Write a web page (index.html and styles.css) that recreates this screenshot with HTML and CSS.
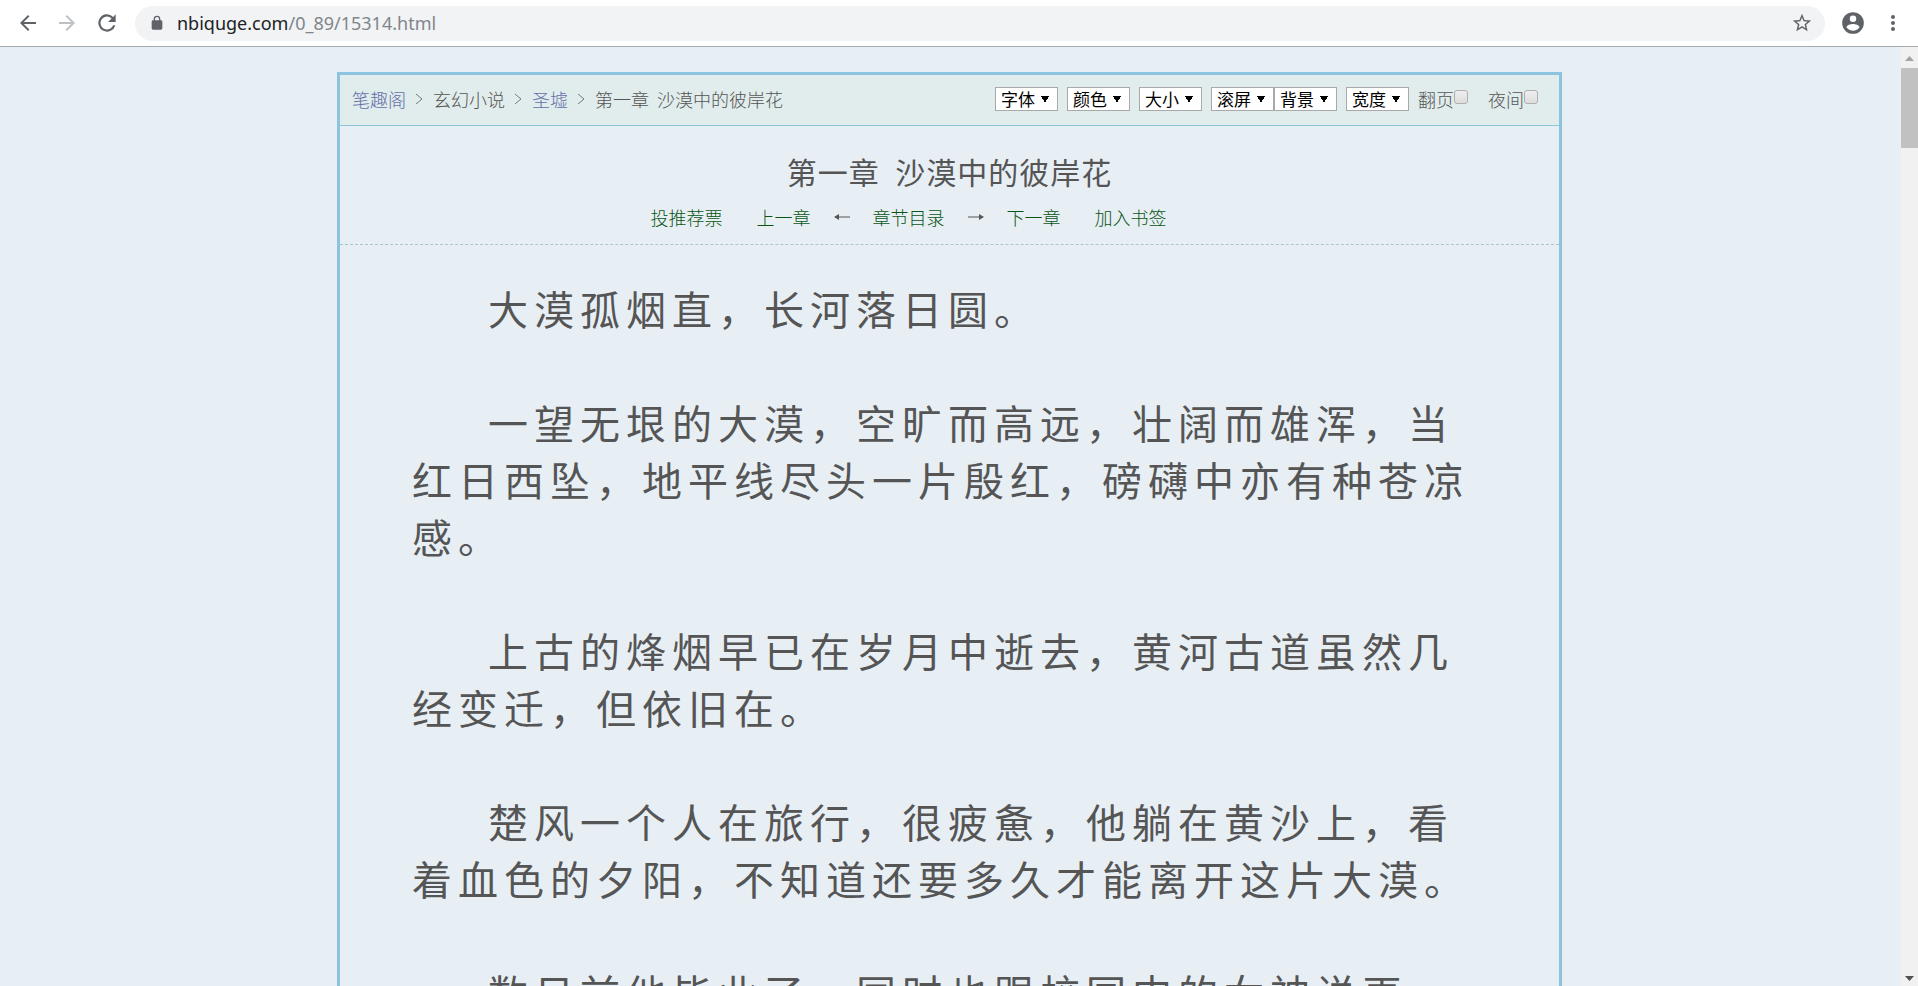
FILE: index.html
```html
<!DOCTYPE html>
<html lang="zh-CN">
<head>
  <meta charset="UTF-8">
  <title>第一章 沙漠中的彼岸花</title>
  <link rel="stylesheet" href="styles.css">
</head>
<body>

  <header class="toolbar">
    <button type="button" class="icon-btn" aria-label="后退">
      <svg width="24" height="24" viewBox="0 0 24 24"><path d="M20 11H7.8l5.6-5.6L12 4l-8 8 8 8 1.4-1.4L7.8 13H20z"/></svg>
    </button>
    <button type="button" class="icon-btn" aria-label="前进" disabled>
      <svg width="24" height="24" viewBox="0 0 24 24"><path d="M4 11h12.2l-5.6-5.6L12 4l8 8-8 8-1.4-1.4 5.6-5.6H4z"/></svg>
    </button>
    <button type="button" class="icon-btn" aria-label="刷新">
      <svg width="26" height="26" viewBox="0 0 24 24"><path d="M17.65 6.35A8 8 0 1 0 19.73 14h-2.08A6 6 0 1 1 12 6c1.66 0 3.14.69 4.22 1.78L13 11h7V4z"/></svg>
    </button>
    <div class="address">
      <svg class="lock" width="16" height="16" viewBox="0 0 24 24"><path d="M18 8h-1V6A5 5 0 0 0 7 6v2H6a2 2 0 0 0-2 2v10c0 1.100.9 2 2 2h12a2 2 0 0 0 2-2V10a2 2 0 0 0-2-2zM9 6a3 3 0 0 1 6 0v2H9z"/></svg>
      <span class="url">nbiquge.com<span class="path">/0_89/15314.html</span></span>
      <button type="button" class="icon-btn star" aria-label="收藏">
        <svg width="22" height="22" viewBox="0 0 24 24"><path d="M22 9.24l-7.19-.62L12 2 9.190 8.630 2 9.240l5.460 4.730L5.820 21 12 17.270 18.180 21l-1.630-7.030L22 9.240zM12 15.400l-3.760 2.270 1-4.280-3.320-2.880 4.380-.38L12 6.100l1.710 4.040 4.380.38-3.320 2.880 1 4.280L12 15.400z"/></svg>
      </button>
    </div>
    <button type="button" class="icon-btn" aria-label="用户">
      <svg width="26" height="26" viewBox="0 0 24 24"><path d="M12 2a10 10 0 1 0 0 20 10 10 0 0 0 0-20zm0 3a3 3 0 1 1 0 6 3 3 0 0 1 0-6zm0 14.200a7.200 7.200 0 0 1-6-3.220c.03-1.990 4-3.080 6-3.080s5.970 1.090 6 3.080a7.200 7.200 0 0 1-6 3.220z"/></svg>
    </button>
    <button type="button" class="icon-btn" aria-label="菜单">
      <svg width="24" height="24" viewBox="0 0 24 24"><path d="M12 8a2 2 0 1 0 0-4 2 2 0 0 0 0 4zm0 2a2 2 0 1 0 0 4 2 2 0 0 0 0-4zm0 6a2 2 0 1 0 0 4 2 2 0 0 0 0-4z"/></svg>
    </button>
  </header>

  <div class="viewport">
    <main class="page">
      <div class="reader">
        <div class="reader-top">
          <nav class="crumbs">
            <a href="#">笔趣阁</a>
            <svg width="7" height="12" viewBox="0 0 7 12"><path d="M0 1l6 5-6 5"/></svg>
            <span>玄幻小说</span>
            <svg width="7" height="12" viewBox="0 0 7 12"><path d="M0 1l6 5-6 5"/></svg>
            <a href="#">圣墟</a>
            <svg width="7" height="12" viewBox="0 0 7 12"><path d="M0 1l6 5-6 5"/></svg>
            <span>第一章&nbsp; 沙漠中的彼岸花</span>
          </nav>
          <form class="settings">
            <select aria-label="字体"><option>字体</option></select>
            <select aria-label="颜色"><option>颜色</option></select>
            <select aria-label="大小"><option>大小</option></select>
            <span class="pair">
              <select aria-label="滚屏"><option>滚屏</option></select>
              <select aria-label="背景"><option>背景</option></select>
            </span>
            <select aria-label="宽度"><option>宽度</option></select>
            <label>翻页<input type="checkbox"></label>
            <label class="night">夜间<input type="checkbox"></label>
          </form>
        </div>

        <div class="chapter-head">
          <h1>第一章&nbsp; 沙漠中的彼岸花</h1>
          <nav class="chapter-nav">
            <a class="vote" href="#">投推荐票</a>
            <a href="#">上一章</a>
            <svg width="16" height="8" viewBox="0 0 16 8"><path d="M0 4l5-3v2.500h11v1H5V7z"/></svg>
            <a href="#">章节目录</a>
            <svg width="16" height="8" viewBox="0 0 16 8"><path d="M16 4l-5-3v2.500H0v1h11V7z"/></svg>
            <a href="#">下一章</a>
            <a class="mark" href="#">加入书签</a>
          </nav>
        </div>

        <article class="content">
          <p>大漠孤烟直，长河落日圆。</p>
          <p>一望无垠的大漠，空旷而高远，壮阔而雄浑，当红日西坠，地平线尽头一片殷红，磅礴中亦有种苍凉感。</p>
          <p>上古的烽烟早已在岁月中逝去，黄河古道虽然几经变迁，但依旧在。</p>
          <p>楚风一个人在旅行，很疲惫，他躺在黄沙上，看着血色的夕阳，不知道还要多久才能离开这片大漠。</p>
          <p>数日前他毕业了，同时也跟校园中的女神说再</p>
        </article>
      </div>
    </main>

    <div class="scrollbar">
      <svg width="9" height="5" viewBox="0 0 9 5"><path class="up" d="M0 5l4.500-5L9 5z"/></svg>
      <div class="thumb"></div>
      <svg width="9" height="5" viewBox="0 0 9 5"><path d="M0 0l4.500 5L9 0z"/></svg>
    </div>
  </div>

</body>
</html>
```

FILE: styles.css
```css
* {
  box-sizing: border-box;
}

body {
  margin: 0;
  height: 100vh;
  display: flex;
  flex-direction: column;
  overflow: hidden;
  background: #e7eff5;
  color: #555;
  font-family: "Noto Sans CJK SC", sans-serif;
  font-size: 18px;
}

a {
  text-decoration: none;
}

/* browser toolbar */
.toolbar {
  display: flex;
  align-items: center;
  gap: 15px;
  height: 47px;
  flex-shrink: 0;
  padding: 0 13px 0 16px;
  background: #fff;
  border-bottom: 1px solid #a8abae;
}

.icon-btn {
  display: flex;
  padding: 0;
  border: none;
  background: none;
  fill: #5f6368;
}

.icon-btn:disabled {
  fill: #bdc1c6;
}

.address {
  flex: 1;
  display: flex;
  align-items: center;
  height: 35px;
  padding: 0 12px 0 14px;
  border-radius: 18px;
  background: #f1f3f4;
}

.lock {
  fill: #5f6368;
}

.url {
  flex: 1;
  margin-left: 12px;
  font-family: "Noto Sans", sans-serif;
  color: #202124;
}

.path {
  color: #80868b;
}

/* page area */
.viewport {
  flex: 1;
  display: flex;
  min-height: 0;
}

.page {
  flex: 1;
  overflow: hidden;
  padding: 25px 2px 0 0;
}

.reader {
  max-width: 1225px;
  margin: 0 auto;
  border: 3px solid #8cc4e0;
}

.reader-top {
  display: flex;
  justify-content: space-between;
  align-items: center;
  height: 51px;
  padding: 0 21px 3px 12px;
  background: #e1ecec;
  border-bottom: 1px solid #8cc4dc;
}

.crumbs {
  display: flex;
  align-items: center;
  gap: 10px;
  font-weight: 300;
}

.crumbs a {
  color: #6470a8;
}

.crumbs svg {
  fill: none;
  stroke: #777;
}

.settings {
  display: flex;
  align-items: center;
  gap: 9px;
}

.pair {
  display: flex;
}

/* the conic gradient draws the small down arrow */
.settings select {
  width: 63px;
  height: 24px;
  padding: 0 0 0 5px;
  border: 1px solid #a9a9a9;
  border-radius: 0;
  appearance: none;
  background: #fff conic-gradient(from -30deg at 50% 100%, #000 60deg, transparent 0) no-repeat right 8px top 8px / 8px 7px;
  font: 17px/22px "Noto Sans CJK SC", sans-serif;
  color: #000;
}

.settings label {
  display: flex;
  align-items: center;
  font-weight: 300;
}

.settings .night {
  margin-left: 11px;
}

.settings input {
  appearance: none;
  width: 14px;
  height: 14px;
  margin: 0 0 4px;
  border: 1px solid #b0b0b0;
  border-radius: 3px;
  background: linear-gradient(#eee, #ddd);
}

/* chapter title */
.chapter-head {
  height: 119px;
  padding-top: 23px;
  border-bottom: 1px dashed #a9c6c6;
}

.chapter-head h1 {
  margin: 0;
  font-size: 30px;
  font-weight: 400;
  line-height: 44px;
  letter-spacing: 1px;
  text-align: center;
}

.chapter-nav {
  display: flex;
  align-items: center;
  justify-content: center;
  gap: 23px;
  padding-right: 82px;
  line-height: 48px;
  fill: #555;
}

.chapter-nav a {
  color: #0a5514;
  font-weight: 300;
}

.chapter-nav .vote {
  margin-right: 11px;
}

.chapter-nav .mark {
  margin-left: 11px;
}

/* chapter text */
.content {
  padding: 35px 72px;
  font-size: 40px;
  line-height: 57px;
  letter-spacing: 6px;
}

.content p {
  margin: 0 0 57px;
  text-indent: 76px;
}

/* scrollbar */
.scrollbar {
  display: flex;
  flex-direction: column;
  align-items: center;
  width: 17px;
  padding: 9px 0 5px;
  background: #f1f1f1;
  fill: #505050;
}

.scrollbar .up {
  fill: #a3a3a3;
}

.thumb {
  width: 17px;
  height: 80px;
  margin: 7px 0 auto;
  background: #c1c1c1;
}
```
